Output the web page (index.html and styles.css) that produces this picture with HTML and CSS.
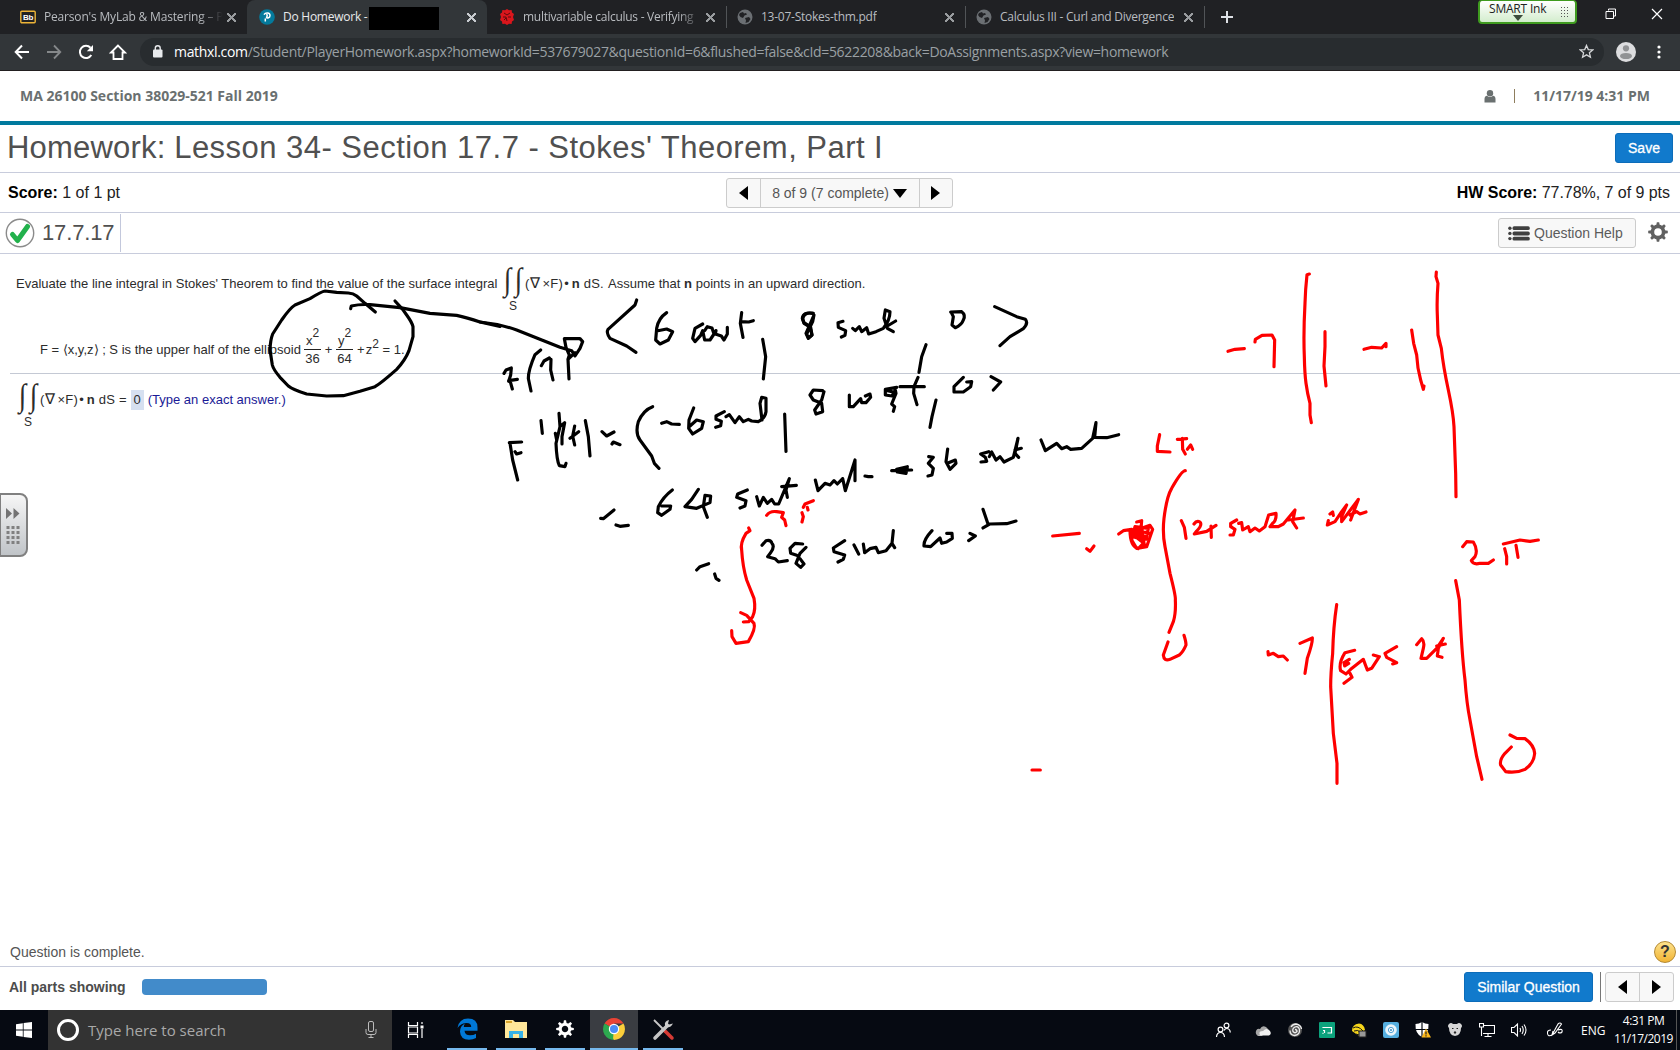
FILE: index.html
```html
<!DOCTYPE html>
<html lang="en">
<head>
<meta charset="utf-8">
<title>Do Homework</title>
<link rel="stylesheet" href="styles.css">
</head>
<body>
<header class="tabs">
  <div class="tab"><svg class="fav" viewBox="0 0 16 16"><rect x=".8" y="2.3" width="14.4" height="11.4" rx="1" fill="#222" stroke="#edb437" stroke-width="1.4"/><text x="8" y="11" text-anchor="middle" class="bb">Bb</text></svg><span class="name fade t1">Pearson's MyLab &amp; Mastering – P</span><span class="x"></span></div>
  <div class="tab active"><svg class="fav" viewBox="0 0 16 16"><circle cx="8" cy="8" r="7.8" fill="#047a9c"/><path d="M6.3 12.5V9.4M5 5.7c1.6-2.6 6-2.2 6 .7 0 2.500-2.700 3-4 2M7.300 5.300c1.300.6 1.200 2.200 0 3" fill="none" stroke="#fff" stroke-width="1.500"/></svg><span class="name t2">Do Homework -</span><span class="redact"></span><span class="x"></span></div>
  <div class="tab"><svg class="fav" viewBox="0 0 16 16"><path d="M8 0l2 1.300 2.600-.3.400 2.500L15 5l-1 3 1 3-2 1.500-.400 2.500-2.600-.3L8 16l-2-1.300-2.600.3-.400-2.500L1 11l1-3-1-3 2-1.500L3.400 1 6 1.300z" fill="#d9161c"/><path d="M5 4l3 2 3-2M4 8h3l1 4M12 8H9M5 11l2-2" fill="none" stroke="#5d090c" stroke-width="1"/></svg><span class="name fade t3">multivariable calculus - Verifying</span><span class="x"></span></div>
  <div class="tab line"><svg class="fav" viewBox="0 0 16 16"><circle cx="8" cy="8" r="7.500" fill="#6b6f73"/><path d="M3 4l3-1 1 1.500 2-.5 1 1.500-2.500 1L6 9 3.500 8 2 6zM8 9l4-1 1.500 2-2 3-3 1 .5-2.500z" fill="#202124"/></svg><span class="name t4">13-07-Stokes-thm.pdf</span><span class="x"></span></div>
  <div class="tab line"><svg class="fav" viewBox="0 0 16 16"><circle cx="8" cy="8" r="7.500" fill="#6b6f73"/><path d="M3 4l3-1 1 1.500 2-.5 1 1.500-2.500 1L6 9 3.500 8 2 6zM8 9l4-1 1.500 2-2 3-3 1 .5-2.500z" fill="#202124"/></svg><span class="name t5">Calculus III - Curl and Divergence</span><span class="x"></span></div>
  <div class="newtab"><svg width="14" height="14" viewBox="0 0 14 14"><path d="M7 1v12M1 7h12" stroke="#dee1e6" stroke-width="2"/></svg></div>
  <div class="winctl">
    <div class="smart"><span>SMART Ink</span><i class="tri"></i><i class="dots"></i></div>
    <svg class="restore" width="12" height="12" viewBox="0 0 12 12"><path d="M3.500 2.500v-1.500h7v7h-2M1 3.500h7.500v7H1z" fill="none" stroke="#fff"/></svg>
    <svg class="close" width="12" height="12" viewBox="0 0 12 12"><path d="M1 1l10 10M11 1L1 11" stroke="#fff" stroke-width="1.200"/></svg>
  </div>
</header>

<nav class="toolbar">
  <svg width="16" height="16" viewBox="0 0 16 16"><path d="M15 8H2M8 1.500L1.700 8 8 14.500" fill="none" stroke="#fff" stroke-width="2"/></svg>
  <svg width="16" height="16" viewBox="0 0 16 16"><path d="M1 8h13M8 1.500L14.300 8 8 14.500" fill="none" stroke="#85888a" stroke-width="1.800"/></svg>
  <svg width="16" height="16" viewBox="0 0 16 16"><path d="M13.300 11A6.100 6.100 0 1 1 12.500 3.800" fill="none" stroke="#fff" stroke-width="2"/><path d="M15 1v6.200H8.800z" fill="#fff"/></svg>
  <svg width="18" height="16" viewBox="0 0 18 16"><path d="M9 1.500L2 8.500h2.500v6.500h9v-6.500H16z" fill="none" stroke="#fff" stroke-width="1.800"/></svg>
  <div class="omni">
    <svg width="10" height="13" viewBox="0 0 10 13"><rect y="4.500" width="9.500" height="8" rx="1" fill="#e8eaed"/><path d="M2.300 5V3.200a2.400 2.400 0 0 1 4.900 0V5" fill="none" stroke="#e8eaed" stroke-width="1.400"/></svg>
    <span class="url"><b>mathxl.com</b>/Student/PlayerHomework.aspx?homeworkId=537679027&amp;questionId=6&amp;flushed=false&amp;cId=5622208&amp;back=DoAssignments.aspx?view=homework</span>
    <svg class="star" width="15" height="15" viewBox="0 0 16 16"><path d="M8 1.500l1.900 4.400 4.800.4-3.600 3.100 1.100 4.700L8 11.600l-4.200 2.500 1.100-4.700L1.300 6.300l4.800-.4z" fill="none" stroke="#d5d7d9" stroke-width="1.400"/></svg>
  </div>
  <svg class="avatar" width="20" height="20" viewBox="0 0 20 20"><circle cx="10" cy="10" r="10" fill="#dcdddf"/><circle cx="10" cy="6.300" r="3.100" fill="#909294"/><ellipse cx="10" cy="14" rx="6" ry="3.100" fill="#909294"/></svg>
  <svg class="kebab" width="4" height="14" viewBox="0 0 4 14"><g fill="#fff"><circle cx="2" cy="2" r="1.600"/><circle cx="2" cy="7" r="1.600"/><circle cx="2" cy="12" r="1.600"/></g></svg>
</nav>

<main class="page">
  <div class="course"><span class="cname">MA 26100 Section 38029-521 Fall 2019</span>
    <svg width="12" height="13" viewBox="0 0 12 13"><circle cx="6" cy="3.300" r="3.200" fill="#6a7070"/><path d="M.5 12.500V9q0-3 2.500-3.300 3 2.400 6 0Q11.500 6 11.500 9v3.500z" fill="#6a7070"/></svg><i class="bar"></i><span class="when">11/17/19 4:31 PM</span></div>
  <div class="titlerow"><h1><span class="hw">Homework:</span> <span class="lesson">Lesson 34- Section 17.7 - Stokes' Theorem, Part I</span></h1><button class="btn save">Save</button></div>
  <div class="scorerow">
    <span class="score"><b>Score:</b> 1 of 1 pt</span>
    <div class="group"><span class="g1"><i class="al"></i></span><span class="g2"><em>8 of 9 (7 complete)</em><i class="ad"></i></span><span class="g3"><i class="ar"></i></span></div>
    <span class="hws"><b>HW Score:</b> 77.78%, 7 of 9 pts</span>
  </div>
  <div class="qrow">
    <div class="qid"><svg width="30" height="30" viewBox="0 0 30 30"><circle cx="15" cy="15" r="13.700" fill="#fff" stroke="#8b8b8b" stroke-width="1.400"/><path d="M7.500 16.500l5 6L22.500 8.500" fill="none" stroke="#22b14c" stroke-width="5" stroke-linecap="round" stroke-linejoin="round"/></svg><span>17.7.17</span></div>
    <div class="help"><svg width="22" height="15" viewBox="0 0 22 15"><g fill="#404040"><circle cx="1.900" cy="2.200" r="1.700"/><circle cx="1.900" cy="7.400" r="1.700"/><circle cx="1.900" cy="12.600" r="1.700"/><rect x="4.500" y=".2" width="17.300" height="3.900" rx="1.700"/><rect x="4.500" y="5.500" width="17.300" height="3.900" rx="1.700"/><rect x="4.500" y="10.700" width="17.300" height="3.900" rx="1.700"/></g></svg><span>Question Help</span></div>
    <svg class="gear" width="20" height="20" viewBox="-10 -10 20 20"><circle r="5.600" fill="none" stroke="#606060" stroke-width="3.600"/><g fill="#606060"><path id="t" d="M-1.800-6.500l.6-3.300h2.400l.6 3.300z"/><use href="#t" transform="rotate(45)"/><use href="#t" transform="rotate(90)"/><use href="#t" transform="rotate(135)"/><use href="#t" transform="rotate(180)"/><use href="#t" transform="rotate(225)"/><use href="#t" transform="rotate(270)"/><use href="#t" transform="rotate(315)"/></g></svg>
  </div>

  <section class="question">
    <div class="line1"><span class="ev">Evaluate the line integral in Stokes' Theorem to find the value of the surface integral</span><span class="ints"><span>∫</span><span>∫</span><small>S</small></span><span class="curl">(<i>∇</i>&#8201;×F)&#8202;•&#8201;<b>n</b> dS.</span><span class="as">Assume that <b>n</b> points in an upward direction.</span></div>
    <div class="line2"><span class="fs">F = ⟨x,y,z⟩ ; S is the upper half of the ellipsoid</span><span class="frac"><span>x<sup>2</sup></span><span>36</span></span><span class="op">+</span><span class="frac"><span>y<sup>2</sup></span><span>64</span></span><span class="tail">+&#8202;z<sup>2</sup> = 1.</span></div>
  </section>
  <section class="answer">
    <span class="ints"><span>∫</span><span>∫</span><small>S</small></span><span class="curl">(<i>∇</i>&#8201;×F)&#8202;•&#8201;<b>n</b> dS =</span><span class="val">0</span><span class="hint">(Type an exact answer.)</span>
  </section>
  <div class="status"><span>Question is complete.</span><b class="qm">?</b></div>
  <footer class="foot"><b class="parts">All parts showing</b><i class="prog"></i><button class="btn sim">Similar Question</button><i class="sep"></i><div class="group small"><span><i class="al"></i></span><span><i class="ar"></i></span></div></footer>
</main>

<div class="taskbar">
  <div class="start"><svg width="16" height="16" viewBox="0 0 16 16"><path d="M0 2.200l6.800-1v6.300H0zM7.600 1.100L16 0v7.500H7.600zM0 8.400h6.800v6.400L0 13.800zM7.600 8.400H16V16l-8.400-1.100z" fill="#fff"/></svg></div>
  <div class="search"><i class="ring"></i><span>Type here to search</span><svg width="12" height="18" viewBox="0 0 12 18"><rect x="3.500" y=".5" width="5" height="10" rx="1.500" fill="none" stroke="#bbb"/><path d="M1 8v3.500q0 2 2 2h6q2 0 2-2V8M6 13.500V17M3.500 16.500h5" fill="none" stroke="#bbb"/></svg></div>
  <div class="app plain"><svg width="18" height="16" viewBox="0 0 18 16"><path d="M1.500 0v3.500h9V0M1.500 16v-3.500h9V16M1.500 5h9v6h-9zM15 0v2M15 7v9" fill="none" stroke="#fff" stroke-width="1.200"/><rect x="13.500" y="3.500" width="3" height="3" fill="#fff"/></svg></div>
  <div class="app"><svg width="21" height="22" viewBox="0 0 21 22"><path d="M.5 10Q2 .5 11 .5q9.500 0 9.500 9v3.300H7.500q.5 4.500 5.500 4.500 3.500 0 6-1.500v4.300q-3 1.700-7 1.700-8.500 0-9-8Q3 8 8 5.500 6.700 7 6.800 9h7.400q0-4-4.500-4Q4 5 .5 10z" fill="#0078d7"/></svg></div>
  <div class="app"><svg width="22" height="18" viewBox="0 0 22 18"><path d="M0 0h8l2 2h12v16H0z" fill="#ffe79a"/><path d="M1 1h6v2H1z" fill="#d9a52a"/><path d="M4 18v-7h14v7h-4v-4H8v4z" fill="#36b1e8"/></svg></div>
  <div class="app"><svg width="18" height="18" viewBox="-10 -10 20 20"><circle r="5.300" fill="none" stroke="#fff" stroke-width="3.400"/><g fill="#fff"><use href="#t"/><use href="#t" transform="rotate(45)"/><use href="#t" transform="rotate(90)"/><use href="#t" transform="rotate(135)"/><use href="#t" transform="rotate(180)"/><use href="#t" transform="rotate(225)"/><use href="#t" transform="rotate(270)"/><use href="#t" transform="rotate(315)"/></g></svg></div>
  <div class="app on"><svg width="22" height="22" viewBox="0 0 22 22"><path d="M11 11L1.500 5.500A11 11 0 0 1 20.500 5.500H11z" fill="#ea4335"/><path d="M11 11l9.500-5.500A11 11 0 0 1 11 22z" fill="#fbce3a"/><path d="M11 11v11A11 11 0 0 1 1.500 5.500z" fill="#2da94f"/><path d="M10 22l5.500-9L11 8z" fill="#fbce3a"/><circle cx="11" cy="11" r="5.200" fill="#fff"/><circle cx="11" cy="11" r="4" fill="#4c8bf5"/></svg></div>
  <div class="app"><svg width="23" height="23" viewBox="0 0 23 23"><path d="M2 2l10 10" stroke="#c9c9c9" stroke-width="1.800"/><path d="M13 13l7 7" stroke="#d63b35" stroke-width="3.500" stroke-linecap="round"/><path d="M3 20L15 8" stroke="#c5c5c5" stroke-width="3.600" stroke-linecap="round"/><path d="M17 2q-5 1-4 5.500 4 4.500 8-2l-4 1-1-1z" fill="#ccc"/></svg></div>
  <div class="tray">
    <svg class="i1" viewBox="0 0 16 16"><g fill="none" stroke="#fff" stroke-width="1.200"><circle cx="5.500" cy="7.500" r="2.400"/><circle cx="11.500" cy="3.500" r="2.400"/><path d="M1.500 15q.3-4.500 4-4.500T9.500 15M9 8.500q1-2 2.500-2 3.500 0 3.800 4"/></g></svg>
    <svg class="i2" viewBox="0 0 16 16"><path d="M1 9q1-3 4-2 2-4 6-2l2 2-6 7H3q-3-2-2-5z" fill="#a6a6a6"/><path d="M5 13q-2-4 3-4 4-4 7 0 2 3-1 4.500H3z" fill="#f1f1f1"/></svg>
    <svg class="i3" viewBox="0 0 16 16"><circle cx="8" cy="8" r="7" fill="#555"/><path d="M3 8.500Q3 13 7.500 13.500 13 13 12.500 7.500 11 3.500 8 5 5 6.500 6 9.500q2 2.500 4 0 0-2-2-2M4 5q2-3 5-3 5 1 5.500 5" fill="none" stroke="#eee" stroke-width="1.300"/></svg>
    <svg class="i4" viewBox="0 0 16 16"><rect width="16" height="16" rx="1" fill="#0ca37d"/><path d="M4 6V5.500h8.500v5.500H8.500M4 8.500h1.500v2.500M3.500 11.300h1" fill="none" stroke="#fff" stroke-width="1.200"/></svg>
    <svg class="i5" viewBox="0 0 16 16"><path d="M1 9Q1 2 8 1.500q5 .5 6 6.500L8 14z" fill="#f5d51b"/><path d="M2 6q5-3 10 3M3 9q4-2 7 2M5 12l3 1" fill="none" stroke="#161616" stroke-width="1"/><rect x="8" y="9" width="7" height="6" fill="#999" stroke="#222"/></svg>
    <svg class="i6" viewBox="0 0 16 16"><rect width="16" height="16" rx="2" fill="#55afe0"/><circle cx="8" cy="8" r="5.800" fill="#e9f5fb"/><circle cx="8" cy="8" r="2.600" fill="#fff" stroke="#4aa0d5"/><circle cx="8" cy="8" r="1" fill="#348fc8"/></svg>
    <svg class="i7" viewBox="0 0 16 16"><path d="M7 0q3 2 6.500 2 .5 10-6.500 13Q0 12 .5 2 4 2 7 0z" fill="#fff"/><path d="M7 0v15M0 7.500h14" stroke="#060a12" stroke-width="1.200"/><path d="M11 6.500l5 9H6.500z" fill="#fcb81c"/><path d="M11 9.500v3M11 13.300v1.200" stroke="#222" stroke-width="1.200"/></svg>
    <svg class="i8" viewBox="0 0 16 16"><path d="M2 2q2-2 4 0h4q2-2 4 0 2 2 0 4 0 7-6 8-6-1-6-8-2-2 0-4z" fill="#d6d6d6"/><path d="M5 6.500h1.500M9.500 6.500H11M7 10h2l-1 1.500z" stroke="#222" fill="#222"/></svg>
    <svg class="i9" viewBox="0 0 16 16"><path d="M4 3.500h11.500v8H4M9 11.500V15M5.500 14.500h7M.5 1.500h4v3.500h-4zM2.500 5v9" fill="none" stroke="#fff" stroke-width="1.100"/></svg>
    <svg class="i10" viewBox="0 0 16 16"><path d="M.5 5.500h2.500L6.500 2v12L3 10.500H.500z M9 6q1 2 0 4M11 4q2.500 4 0 8M13 2.500q4 5.500 0 11" fill="none" stroke="#fff" stroke-width="1.100"/></svg>
    <svg class="i11" viewBox="0 0 16 16"><path d="M4 8Q0 8 .5 11.500 1 15 5 13L11 2q2-2 3.500 0L8 11l-3 2 1-4M11 8q5-2 4 2-2 2-4 0" fill="none" stroke="#fff" stroke-width="1.100"/></svg>
    <span class="eng">ENG</span>
    <div class="clock"><span>4:31 PM</span><span class="date">11/17/2019</span></div>
    <i class="peek"></i>
  </div>
</div>

<aside class="drawer"><svg width="14" height="37" viewBox="0 0 14 37"><path d="M0 0l6 5.500L0 11zM7.500 0l6 5.500-6 5.500z" fill="#737373"/><g fill="#808080"><path d="M.5 18h3v3h-3zM5.500 18h3v3h-3zM10.500 18h3v3h-3zM.5 23h3v3h-3zM5.500 23h3v3h-3zM10.500 23h3v3h-3zM.5 28h3v3h-3zM5.500 28h3v3h-3zM10.500 28h3v3h-3zM.5 33h3v3h-3zM5.500 33h3v3h-3zM10.500 33h3v3h-3z"/></g></svg></aside>

<svg class="ink" width="1680" height="1050" viewBox="0 0 1680 1050">
  <g class="black" transform="translate(0 250) scale(.33333)">
    <path d="M1126 186L1095 160 1070 138Q1060 130 1045 129L1010 127 975 123Q965 124 930 146L885 165Q870 174 845 210L818 252Q811 270 810 300L817 345Q820 358 840 382L865 408Q880 420 920 432L980 438 1030 437 1080 424 1125 410Q1145 398 1190 358 1215 332 1227 302L1239 260 1239 230Q1236 217 1220 195L1208 178 1185 153"/>
    <path d="M1052 176L1054 168Q1080 162 1110 164L1200 173 1290 190 1370 196Q1400 202 1440 216L1500 229"/>
  </g>
  <g class="black" transform="translate(480 260) scale(.33333)">
    <path d="M0 186Q60 192 110 210L240 262 275 272 285 288 300 265 308 245 300 236 253 236 258 262 268 285 264 298 267 357M264 298L285 278"/>
    <path d="M182 270L165 284Q145 330 145 355L153 393M184 317L192 303 208 294M213 298L212 330 219 360M72 340L78 330 94 324 92 345 86 364M86 362L112 358M90 362L97 387"/>
    <path d="M470 120L465 135 384 208Q378 218 390 235L440 258 468 277M560 158Q535 175 530 205L527 240 540 252 565 240 578 215 560 207 530 213"/>
    <path d="M668 192L645 205 638 235 645 245 662 226 668 212 674 240 690 240 702 222 696 204 682 200 674 212M708 212L706 222 724 228 732 240 742 222 742 202M785 158L781 190 789 232M785 185L806 186 820 182M848 238L857 290 850 357"/>
    <path d="M998 160Q970 155 967 175L972 188 990 200 996 225 985 235 978 220 1000 170"/>
    <path d="M88 548L125 546M90 550L98 600 113 660M105 575L110 582 123 578M183 482L187 520M237 460L240 500 228 550Q230 600 238 617L255 620 258 610M226 520L230 540M240 500L254 488 246 530 246 552M284 498L278 528 284 555M270 535L296 515M316 482L325 530 330 588M366 515L380 528 402 516M396 552L400 546 420 554"/>
    <path d="M518 440Q490 450 475 485 465 520 480 540L515 588 523 610 537 625M545 490L560 485 575 492 598 493M641 444L627 480 626 505 638 522 665 505 670 485 650 480 630 498M733 455L708 468 708 478 724 484 722 497 707 502M738 470L748 464 765 488 778 470 790 485 805 478 815 483 835 485Q855 475 858 455L858 415 845 412 840 430 846 480M914 462L918 574"/>
    <path d="M362 775L370 776 402 750M408 795L420 799 445 796M577 690Q550 710 535 740L533 758 545 766 570 748 572 738 545 738M655 688L635 718 615 740 650 745 690 728 692 708 675 706 670 740 682 772M802 690L773 702 770 712 798 722 795 738 780 744M830 710L838 738 850 712 862 730 875 718 884 732 896 732 928 656 918 690 922 712M905 680L949 676M650 930L660 920 686 911M704 942L708 955 717 961"/>
    <path d="M846 856L858 842Q872 838 876 850 885 860 872 878L863 890 885 896 895 906 922 902M968 852L945 850 930 865 932 880 950 886M978 862L960 880 948 910 962 922 972 912 960 896"/>
  </g>
  <g class="black" transform="translate(800 260) scale(.33333)">
    <path d="M40 160Q10 155 8 178L12 190 32 202 36 225 25 234 20 222 38 185 42 165M129 184L114 188 115 202 137 212 135 226 124 231M158 205L166 212 178 200 185 215 200 203 206 222 228 215 250 205Q270 180 270 155L256 150 252 175 262 205 280 215M262 198L287 183M454 158L460 170 456 195 466 203Q485 195 490 180 498 165 485 155L452 156"/>
    <path d="M584 140L650 170 676 178Q686 190 670 206L630 230 600 257M378 254L365 290 357 337M68 392L40 390 30 405 40 420 65 430 68 455 48 462 44 450 65 420 72 395M148 405L148 440 160 440 182 416 185 428 198 428 212 412 210 402 196 408M290 382L256 388 256 405 276 408 286 390 288 400 275 432 284 440 280 454M262 392L280 396M300 380L373 380M354 352L342 380 341 400 351 434M408 420L396 470 390 502M490 352L462 380 462 396 490 396 512 380 515 365 500 366M573 350L602 366 580 390"/>
    <path d="M46 660L54 692 75 670 90 675 102 662 112 672 128 656M128 656L136 692 165 600 165 662M195 648L205 650 216 650M275 632L335 630M290 628L322 620 318 640 292 636M386 590L400 592 385 610 400 625 396 645 384 648M443 567L438 605 450 628 468 610 466 600 442 610M566 575L542 582 556 592 560 604 543 606M568 590L575 576 588 600 600 590 612 606 640 592 654 535 645 580 656 592M645 570L664 565"/>
    <path d="M723 540L736 572 770 550 785 566 800 560 812 568 845 565 878 535 888 488 884 532 920 533 956 524"/>
    <path d="M134 842L100 864 102 875 134 885 130 898 114 906M162 855L176 882M190 852L194 878 210 866 228 862 235 878 258 872 276 850 280 812 276 850 284 863M396 812Q370 840 372 858L392 860 420 834 425 850 440 846 457 835 456 820 440 820M510 820L526 828 506 842M549 748L564 792M549 804L570 792 620 791 648 783"/>
  </g>
  <g class="red" transform="translate(480 260) scale(.33333)">
    <path d="M806 804L810 812 798 820Q780 850 785 870 788 920 800 960L822 1015Q828 1050 818 1070L806 1085 790 1086M782 1058L800 1066 822 1090Q828 1105 805 1145L768 1150 756 1130 755 1112"/>
    <path d="M860 766Q870 752 890 755L910 758 905 772 914 780 918 797M970 742L975 732 1000 722M966 758L970 770 966 786M982 742L984 750"/>
  </g>
  <g class="red" transform="translate(1020 400) scale(.33333)">
    <path d="M98 408L178 400M200 446L210 454 222 438M296 402L310 392 335 388M350 366L365 362 362 400 335 395 390 376 398 388 380 440 350 445 335 420 345 380 385 385 380 410 340 405 372 430 365 380M330 390Q330 440 355 446L370 430 380 440M345 390L390 400M345 412L385 418"/>
    <path d="M419 104L412 138 412 154 450 156M472 118L500 116M487 115L488 148 496 162M502 148L512 135 518 148"/>
    <path d="M496 212Q485 212 455 265 440 290 432 355 427 400 435 440L450 520Q468 590 466 600 468 640 460 665L447 697M444 726L430 765Q432 785 450 778L478 765Q490 755 498 735 498 725 492 706"/>
    <path d="M484 362L493 382 498 415M522 372Q530 360 540 366 548 375 530 393L523 402 560 394 588 376M573 378L574 412M650 360L632 370 632 380 645 388 640 405 630 405M656 370L665 368 668 390 685 380 690 395 705 384 718 393 735 380 746 345 768 340Q770 360 758 370L750 380 775 380 790 372 825 330 818 365 830 384M805 360L850 354M930 342L938 336 940 346M925 362L922 375 945 365 965 335 980 315 965 350 965 365 1015 298 992 360M990 345L1010 335 1020 342 1038 336"/>
    <path d="M950 614Q940 680 938 760 932 820 932 860L940 1000 951 1090V1150M744 755L745 765 760 760 775 770 790 768 802 780M840 730L877 714Q878 730 862 775L855 820M1004 751L975 758Q955 790 962 812L978 822 992 808 1030 778 1042 810 1055 805 1078 770 1060 765M988 778L972 788 974 798 986 790M990 820L996 832 972 850M1130 740L1095 760 1100 772 1130 788 1118 792M36 1110H61"/>
  </g>
  <g class="red" transform="translate(1240 520) scale(.33333)">
    <path d="M530 374L545 356Q555 365 550 385L543 415 560 415 590 385 610 355 595 385 592 408 606 412M590 378L616 372M647 182L658 240Q665 400 675 480 680 550 690 600L710 710 726 778M668 80L680 65 700 66Q715 90 705 110L694 122Q700 135 720 130L745 130 760 120M790 72L840 60 870 64 895 60M794 86L800 110 800 132M828 76L834 112M810 645L830 655 855 656Q882 675 884 700 882 730 855 748 830 760 797 755L782 735Q778 720 795 700L814 681"/>
  </g>
  <g class="red" transform="translate(1200 260) scale(.33333)">
    <path d="M84 274L105 268 133 266M165 246L166 238 186 226 216 225 224 240 222 320M328 42L321 44Q316 90 315 130 310 220 313 290 314 340 318 370 322 400 330 430V465L334 488M375 215V260L372 318 378 378M492 268L515 262 545 264 558 250 558 260M635 210L641 250 650 285Q652 325 662 360L670 388 672 378M709 36L708 50 714 70Q710 120 712 165L714 225 724 265Q730 320 745 390 760 460 762 500L767 640 768 710"/>
  </g>
</svg>
</body>
</html>
```
FILE: styles.css
```css
* { box-sizing: border-box; }
body { margin: 0; width: 1680px; height: 1050px; overflow: hidden; display: flex; flex-direction: column; position: relative; background: #fff; font-family: "Liberation Sans", Arial, sans-serif; color: #2c2c2c; white-space: nowrap; }
svg { display: block; flex: none; }
i, em { font-style: normal; }
button { font: inherit; }

/* browser chrome */
.tabs { height: 34px; background: #202124; display: flex; padding-left: 8px; font: 12px/16px "Open Sans", "Noto Sans", sans-serif; letter-spacing: -.25px; color: #b9bcc0; }
.tab { width: 239px; flex: none; display: flex; align-items: center; padding: 0 10px 0 12px; border-radius: 8px 8px 0 0; }
.tab.active { width: 240px; background: #323639; color: #e9eaec; }
.tab.line { padding-left: 10px; padding-right: 10px; }
.tab.line, .newtab { border-left: 1px solid transparent; border-image: linear-gradient(transparent 7px, #515457 7px, #515457 27px, transparent 27px) 1; }
.fav { width: 16px; height: 16px; margin-right: 8px; }
.bb { font: bold 8px "Liberation Sans", sans-serif; fill: #fff; }
.name { overflow: hidden; }
.t1 { width: 180px; letter-spacing: -.18px; }
.t2 { width: 86px; }
.t3 { width: 180px; letter-spacing: -.28px; }
.fade { -webkit-mask: linear-gradient(90deg, #000 155px, transparent 179px); mask: linear-gradient(90deg, #000 155px, transparent 179px); }
.redact { width: 70px; height: 23px; background: #000; margin-top: 3px; }
.x { width: 9px; height: 9px; margin: 0 1px 0 auto; background: linear-gradient(45deg, transparent 44%, #999c9f 44%, #999c9f 56%, transparent 56%), linear-gradient(-45deg, transparent 44%, #999c9f 44%, #999c9f 56%, transparent 56%); }
.active .x { filter: brightness(1.3); }
.newtab { width: 44px; display: flex; align-items: center; justify-content: center; }
.winctl { margin-left: auto; display: flex; padding-right: 17px; }
.smart { width: 99px; height: 24px; border: 2px solid #3f9b1f; border-top-width: 1px; border-radius: 4px; background: linear-gradient(#fff, #d3edcd); color: #222; font-size: 12px; line-height: 16px; padding-left: 9px; position: relative; letter-spacing: -.2px; }
.tri { position: absolute; left: 33px; top: 14px; border: 5px solid transparent; border-top: 6px solid #3c4c3c; border-bottom: 0; }
.dots { position: absolute; right: 6px; top: 5px; width: 9px; height: 12px; background: radial-gradient(circle, #555 0 .8px, transparent 1px) 0 0/3px 3px; }
.restore { margin: 8px 0 0 28px; }
.close { margin: 8px 0 0 34px; }
.toolbar { height: 37px; background: #323639; border-bottom: 1px solid #221f20; display: flex; align-items: center; padding: 0 19px 1px 14px; }
.toolbar > svg { margin-right: 16px; }
.toolbar > svg:nth-of-type(4) { margin: 0 13px 0 -1px; }
.omni { flex: 1; height: 28px; border-radius: 14px; background: #282c2f; display: flex; align-items: center; padding: 0 10px 0 13px; font: 14px/20px "Open Sans", "Noto Sans", sans-serif; color: #9aa0a4; }
.url { margin-left: 11px; letter-spacing: -.32px; }
.url b { font-weight: 400; color: #fff; }
.star { margin-left: auto; }
.toolbar > .avatar { margin: 0 21px 0 12px; }
.toolbar > .kebab { margin: 0; }

/* course page */
.page { flex: 1; display: flex; flex-direction: column; }
.course { height: 54px; border-bottom: 4px solid #007a9e; display: flex; align-items: center; padding: 0 30px 0 20px; font: bold 14px/20px "Open Sans", "Noto Sans", sans-serif; color: #6a7070; flex: none; }
.course svg { margin-left: auto; }
.bar { width: 1px; height: 14px; background: #8e7d5d; margin: 0 18px; }
.titlerow { height: 48px; border-bottom: 1px solid #c8ccdc; display: flex; align-items: center; justify-content: space-between; padding: 0 7px 2px 7px; flex: none; }
h1 { margin: 0; font-size: 31px; line-height: 34px; font-weight: 400; color: #505050; }
.hw { letter-spacing: .2px; }
.lesson { letter-spacing: .47px; }
.btn { height: 30px; border: 1px solid #0c6cb9; border-radius: 3px; background: #117acc; color: #fff; padding: 0; font-size: 14px; -webkit-text-stroke: .3px #fff; }
.save { width: 58px; }
.scorerow { height: 40px; border-bottom: 1px solid #c8ccdc; display: grid; grid-template-columns: 1fr 227px 1fr; align-items: center; padding: 0 10px 0 8px; font-size: 16px; color: #222; flex: none; }
.scorerow b { color: #000; }
.hws { text-align: right; letter-spacing: -.04px; }
.group { display: flex; height: 30px; border: 1px solid #ccc; border-radius: 3px; background: #f8f8f8; }
.group span { display: flex; align-items: center; justify-content: center; flex: 0 0 33px; }
.group span + span { border-left: 1px solid #ccc; }
.group .g2 { flex: 1; font-size: 14px; color: #555; gap: 4px; }
.al { border: 7px solid transparent; border-right: 9px solid #000; border-left: 0; }
.ar { border: 7px solid transparent; border-left: 9px solid #000; border-right: 0; }
.ad { border: 7px solid transparent; border-top: 9px solid #000; border-bottom: 0; margin-top: 2px; }
.qrow { height: 41px; border-bottom: 1px solid #c8ccdc; display: flex; align-items: center; padding: 0 12px 0 5px; flex: none; }
.qid { display: flex; align-items: center; height: 38px; width: 116px; border-right: 1px solid #c3c8dc; font-size: 22px; letter-spacing: -.15px; color: #505050; gap: 7px; }
.help { width: 138px; height: 30px; margin-left: auto; border: 1px solid #ccc; border-radius: 3px; background: #f8f8f8; display: flex; align-items: center; gap: 4px; padding-left: 9px; font-size: 14px; color: #5b5b5b; }
.gear { margin-left: 12px; margin-top: -2px; }

/* exercise */
.question, .answer { font-size: 13px; line-height: 20px; }
.question { height: 120px; margin-left: 10px; border-bottom: 1px solid #c4c9d4; padding: 9px 0 0 6px; flex: none; }
.line1 { display: flex; align-items: center; height: 42px; }
.ev { width: 487px; }
.ints { position: relative; display: flex; width: 22px; font: 32px/30px "Liberation Serif", serif; }
.ints span { width: 12px; transform: translateY(-5px) scaleX(.85); }
.ints small { position: absolute; left: 6px; top: 30px; font: 12px/14px "Liberation Sans", sans-serif; }
.curl { letter-spacing: .2px; }
.curl i { font: 15px/14px "Liberation Serif", serif; }
.as { margin-left: 4px; letter-spacing: .02px; }
.line2 { display: flex; align-items: center; height: 60px; padding: 29px 0 0 24px; }
.fs { width: 264px; }
.frac { display: flex; flex-direction: column; align-items: center; width: 17px; line-height: 17px; margin-top: -1px; }
.frac span + span { border-top: 1px solid #222; width: 17px; text-align: center; }
.frac sup, .tail sup { font-size: 12px; line-height: 0; vertical-align: 8px; }
.tail sup { vertical-align: 6px; }
.op { width: 15px; text-align: center; }
.tail { margin-left: 4px; }
.answer { display: flex; align-items: center; height: 52px; padding-left: 18px; flex: none; }
.val { width: 13px; height: 20px; margin-left: 4px; background: #d6e0f0; text-align: center; }
.hint { margin-left: 4px; color: #1a1a96; }
.status { margin-top: auto; height: 30px; border-bottom: 1px solid #c8ccdc; display: flex; align-items: center; justify-content: space-between; padding: 0 4px 0 10px; font-size: 14px; color: #555; flex: none; }
.qm { width: 22px; height: 22px; border: 1px solid #b48933; border-radius: 50%; background: linear-gradient(#fde28c, #f1b434); color: #333; font-size: 16px; line-height: 20px; text-align: center; }
.foot { height: 43px; display: flex; align-items: center; padding: 0 6px 3px 9px; flex: none; }
.parts { font-size: 14px; color: #4c4c4c; width: 133px; }
.prog { width: 125px; height: 16px; border-radius: 4px; background: #428bca; }
.sim { width: 129px; margin-left: auto; }
.sep { width: 1px; height: 30px; background: #777; margin: 0 4px 0 7px; }
.group.small { width: 69px; }
.small span { flex: 1; }

/* desktop taskbar */
.taskbar { height: 40px; background: #060a12; display: flex; font-family: "Open Sans", "Noto Sans", sans-serif; color: #fff; flex: none; }
.start { width: 48px; display: flex; align-items: center; justify-content: center; }
.search { width: 344px; background: #333; display: flex; align-items: center; padding: 0 15px 0 9px; font-size: 15px; color: #a9a9a9; }
.ring { width: 22px; height: 22px; border: 3px solid #fff; border-radius: 50%; margin-right: 9px; }
.search svg { margin-left: auto; }
.app { width: 40px; margin-right: 9px; border-bottom: 2px solid #76b9ed; display: flex; align-items: center; justify-content: center; }
.app.plain { width: 48px; margin-right: 7px; border: 0; }
.app.on { width: 48px; margin: 0 5px 0 -4px; background: #3a3d42; }
.tray { margin-left: auto; display: flex; align-items: center; }
.tray svg { width: 16px; height: 16px; margin-right: 16px; }
.tray .i1 { margin-right: 24px; }
.tray .i11 { margin: 0 18px 0 20px; }
.tray .i10 { margin-right: 0; }
.eng { font-size: 12px; width: 33px; }
.clock { display: flex; flex-direction: column; align-items: center; font-size: 12px; line-height: 18px; letter-spacing: -.48px; }
.peek { width: 1px; height: 40px; background: #555; margin: 0 3px; }

/* floating layers */
.drawer { position: absolute; left: -1px; top: 493px; width: 29px; height: 64px; border: 2px solid #808080; border-radius: 0 8px 8px 0; background: linear-gradient(#f6f6f6, #c0c4c8); padding: 13px 0 0 5px; }
.ink { position: absolute; left: 0; top: 0; pointer-events: none; }
.ink path { fill: none; stroke-width: 9.500; stroke-linecap: round; stroke-linejoin: round; }
.black path { stroke: #000; }
.red path { stroke: #fe0000; }
```
